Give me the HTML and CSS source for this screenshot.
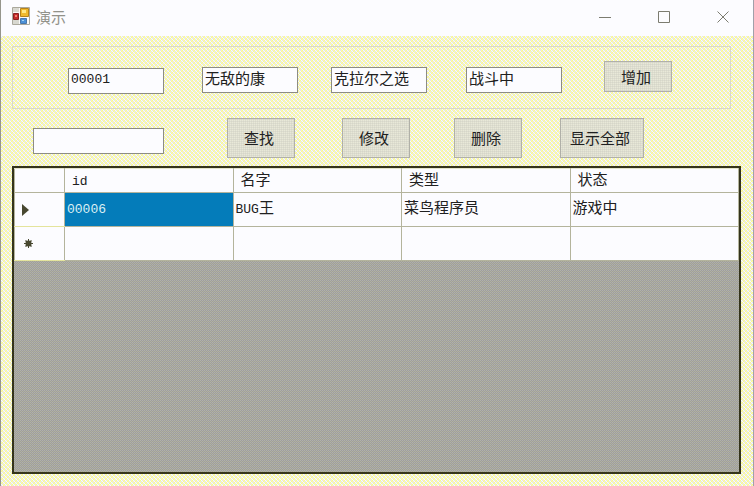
FILE: index.html
```html
<!DOCTYPE html>
<html lang="zh-CN">
<head>
<meta charset="utf-8">
<title>演示</title>
<link rel="stylesheet" href="styles.css">
</head>
<body>
<div class="window">
  <header class="titlebar">
    <svg class="app-icon" viewBox="0 0 18 18" aria-hidden="true">
      <path fill="#fafafa" stroke="#aaa89c" d="M.5 .5h17v17H.5z"/>
      <path fill="#d8d8d0" d="M1 1h6v4H1zM1 13h6v4H1z"/>
      <path fill="#f0b92c" stroke="#b78319" d="M8.500 1.500h8v8h-8z"/>
      <path fill="#ffe783" d="M10 3h4v3h-4z"/>
      <path fill="#c42b2b" stroke="#8b2020" d="M1.500 6.500h5v6h-5z"/>
      <path fill="#ed8070" d="M3 8h2v2H3z"/>
      <path fill="#4c91d8" stroke="#4977aa" d="M8.500 11.500h6v5h-6z"/>
      <path fill="#a4d4f5" d="M10 13h2v1h-2z"/>
    </svg>
    <h1 class="title">演示</h1>
    <div class="window-controls">
      <button type="button" aria-label="最小化"><svg viewBox="0 0 13 13"><path d="M0 6.500h12"/></svg></button>
      <button type="button" aria-label="最大化"><svg viewBox="0 0 13 13"><path d="M.5 .5h11v11H.5z"/></svg></button>
      <button type="button" aria-label="关闭"><svg viewBox="0 0 13 13"><path d="M.5 .5l11 11M11.500 .5l-11 11"/></svg></button>
    </div>
  </header>
  <main class="content">
    <form class="entry">
      <input type="text" class="entry-id latin" aria-label="id" value="00001">
      <input type="text" class="entry-name" aria-label="名字" value="无敌的康">
      <input type="text" class="entry-kind" aria-label="类型" value="克拉尔之选">
      <input type="text" class="entry-state" aria-label="状态" value="战斗中">
      <button type="button" class="button add">增加</button>
    </form>
    <div class="toolbar">
      <input type="text" class="query" aria-label="查找内容">
      <button type="button" class="button find">查找</button>
      <button type="button" class="button edit">修改</button>
      <button type="button" class="button remove">删除</button>
      <button type="button" class="button all">显示全部</button>
    </div>
    <div class="grid">
      <table>
        <colgroup><col class="marker-col"><col><col><col><col></colgroup>
        <thead><tr><th aria-label="行"></th><th><span class="latin">id</span></th><th>名字</th><th>类型</th><th>状态</th></tr></thead>
        <tbody>
          <tr><th scope="row" aria-label="当前行"><svg class="marker" viewBox="0 0 18 14"><path d="M1 1l7 6-7 6z"/></svg></th><td class="selected"><span class="latin">00006</span></td><td><span class="latin">BUG</span>王</td><td>菜鸟程序员</td><td>游戏中</td></tr>
          <tr><th scope="row" aria-label="新行"><svg class="marker" viewBox="0 0 18 14"><circle cx="7.500" cy="6.500" r="3"/><path d="M7 2h1v9H7zM3 6h9v1H3zM4 4l1-1 6 6-1 1zM10 3l1 1-6 6-1-1z"/></svg></th><td></td><td></td><td></td><td></td></tr>
        </tbody>
      </table>
    </div>
  </main>
</div>
</body>
</html>
```
FILE: styles.css
```css
* { box-sizing: border-box; }

body {
  margin: 0;
  font-family: "Liberation Mono", "Noto Sans CJK SC", monospace;
  font-size: 15px;
  color: #202020;
}

.window {
  display: flex;
  flex-direction: column;
  min-height: 100vh;
  border-left: 1px solid #96968c;
  border-right: 1px solid #a0a0aa;
  background-color: #fcfcfa;
  background-image:
    conic-gradient(rgb(255 255 96 / 55%) 25%, transparent 0 50%, rgb(255 255 96 / 55%) 0 75%, transparent 0),
    conic-gradient(#e4e4ee 25%, transparent 0 50%, #e4e4ee 0 75%, transparent 0);
  background-size: 4px 4px, 2px 2px;
}

.titlebar {
  display: flex;
  align-items: center;
  height: 36px;
  padding-left: 11px;
  background: #fcfcff;
}

.app-icon { width: 18px; height: 18px; margin-bottom: 4px; }

.title {
  margin: 0 auto 4px 6px;
  font: 15px "Noto Sans CJK SC", sans-serif;
  color: #92928a;
}

.window-controls { display: flex; margin-bottom: 2px; }

.window-controls button {
  width: 59px;
  height: 34px;
  padding: 0;
  border: 0;
  background: none;
}

.window-controls svg {
  display: block;
  width: 13px;
  height: 13px;
  margin: 0 auto;
  fill: none;
  stroke: #7c7c70;
}

.content {
  display: flex;
  flex: 1;
  flex-direction: column;
  padding: 10px 12px 12px 11px;
}

.entry {
  display: flex;
  align-items: center;
  height: 63px;
  margin-right: 10px;
  padding-left: 55px;
  padding-bottom: 2px;
  border: 1px solid #d8d8c8;
}

input {
  height: 26px;
  padding: 0 2px 4px;
  border: 1px solid #8c8c84;
  border-radius: 0;
  background: #fcfcff;
  color: inherit;
  font: inherit;
  line-height: 20px;
}

.entry input { width: 96px; margin-top: 6px; }
.entry .entry-id { margin-top: 8px; padding-bottom: 2px; }
.entry-name { margin-left: 38px; }
.entry-kind { margin-left: 33px; }
.entry-state { margin-left: 39px; }
.query { width: 131px; }

.entry .latin, .latin { font-size: 13px; }

.button {
  height: 40px;
  width: 68px;
  padding: 0 4px 0 0;
  border: 1px solid #b0b0a8;
  background: conic-gradient(#d6d6c8 25%, #dedecf 0 50%, #e8e8d8 0 75%, #dcdcd0 0) 0 0 / 2px 2px;
  color: inherit;
  font: inherit;
}

.entry .add { height: 31px; margin-left: 42px; }

.toolbar {
  display: flex;
  align-items: center;
  margin: 9px 0 8px;
  padding-left: 21px;
}

.toolbar .query { margin-top: 6px; }
.find { margin-left: 63px; }
.edit { margin-left: 47px; }
.remove { margin-left: 44px; }
.all { width: 84px; margin-left: 38px; }

.grid {
  flex: 1;
  border: 2px solid #34341c;
  background: conic-gradient(#9c9ca2 25%, #b0b0a0 0 50%, #a0a098 0 75%, #b2b2a8 0) 0 0 / 2px 2px;
}

table {
  width: 100%;
  border-collapse: collapse;
  table-layout: fixed;
}

.marker-col { width: 50px; }

tr { height: 34px; }
thead tr { height: 24px; }

th, td {
  padding: 0 2px;
  border: 1px solid #b4b49c;
  background: #fcfcff;
  font-weight: normal;
  line-height: 20px;
  text-align: left;
}

thead th { padding: 2px 0 0 7px; border-top-color: #e4e4cc; }
thead th:nth-child(n + 3) { border-left-color: #e4e49c; }
tbody th { padding-left: 6px; border-bottom-color: #e4e49c; }

.selected {
  background: conic-gradient(#0074b0 25%, #0884c4 0 50%, #0074b0 0 75%, #0884c4 0) 0 0 / 2px 2px;
  color: #dcf0f4;
}

.marker { display: block; width: 18px; height: 14px; fill: #484830; }
```
